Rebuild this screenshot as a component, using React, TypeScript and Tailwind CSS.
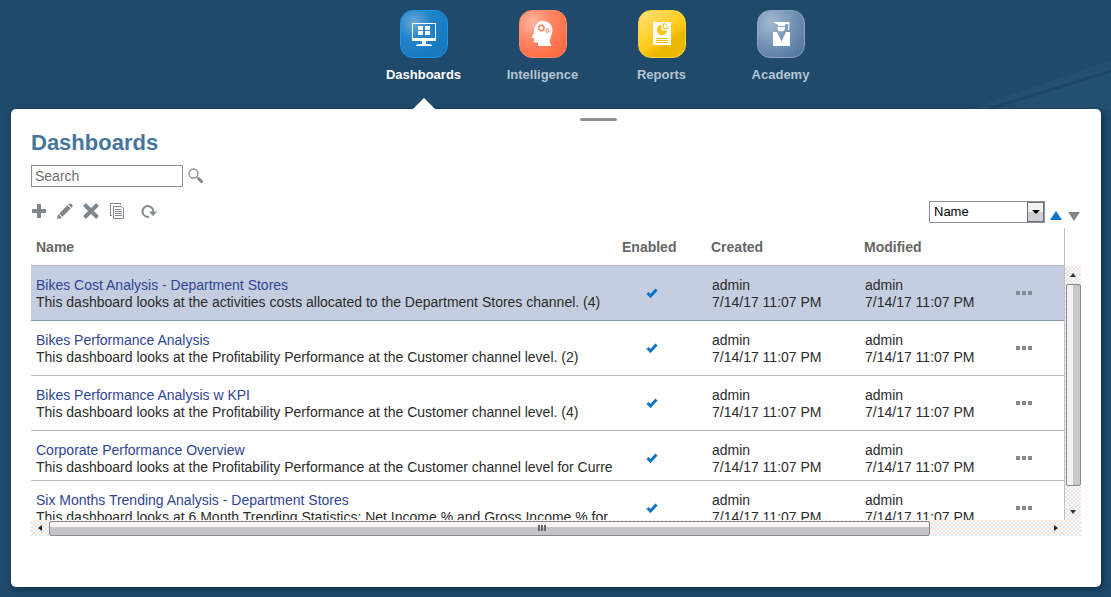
import React from "react";

const navItems = [
  { label: "Dashboards", active: true, tile: "border-[#1a94f5] bg-[radial-gradient(circle_at_28%_25%,#6aa9d6_0%,#2283c9_36%,#167abd_75%)]" },
  { label: "Intelligence", active: false, tile: "border-[#ff8a6b] bg-[radial-gradient(circle_at_28%_25%,#ffb5a0_0%,#ff8362_42%,#ff6a40_85%)]" },
  { label: "Reports", active: false, tile: "border-[#fcd43a] bg-[linear-gradient(145deg,#ffdf6a_8%,#ffc915_55%,#eab800_68%)]" },
  { label: "Academy", active: false, tile: "border-[#8ba6c3] bg-[radial-gradient(circle_at_28%_25%,#a3b9d0_0%,#7695b6_45%,#486e99_100%)]" },
];

const channel = "This dashboard looks at the Profitability Performance at the Customer channel level";

const rows = [
  {
    name: "Bikes Cost Analysis - Department Stores",
    text: "This dashboard looks at the activities costs allocated to the Department Stores channel. (4)",
    rowClass: "h-[55px] border-[#8d97ab] bg-[#c5cde0]",
  },
  { name: "Bikes Performance Analysis", text: channel + ". (2)", rowClass: "h-[55px] border-[#b8b8bc]" },
  { name: "Bikes Performance Analysis w KPI", text: channel + ". (4)", rowClass: "h-[55px] border-[#b8b8bc]" },
  { name: "Corporate Performance Overview", text: channel + " for Curre", rowClass: "h-[50px] border-[#b8b8bc]" },
  {
    name: "Six Months Trending Analysis - Department Stores",
    text: "This dashboard looks at 6 Month Trending Statistics: Net Income % and Gross Income % for",
    rowClass: "h-[50px] border-[#b8b8bc]",
  },
];

function NavGlyph({ name }: { name: string }) {
  if (name === "Dashboards") {
    return (
      <svg viewBox="0 0 48 48" className="size-12 shrink-0" aria-hidden="true">
        <path fill="#fff" fillRule="evenodd" d="M12 13h24v18H12zM13 14v14h22V14z" />
        <path fill="#fff" d="M18 16h5v4h-5zM25 16h5v4h-5zM18 21h5v4h-5zM25 21h5v4h-5zM22 31h4v3h-4zM16 35l3-1h10l3 1v1H16z" />
      </svg>
    );
  }
  if (name === "Intelligence") {
    return (
      <svg viewBox="0 0 48 48" className="size-12 shrink-0" aria-hidden="true">
        <path
          fill="#fff"
          d="M19 36v-3.500h-2.500c-1.200 0-1.700-.7-1.500-1.800l.3-2.700h-2.100c-.5 0-.6-.4-.3-.9l2-3.600c.2-.5.100-1 .1-1.600.2-6.600 3.500-10.900 9-10.900 5.600 0 9.500 4 9.500 9.300 0 4.200-2.300 6.500-2.600 9.800-.2 2.600.4 4.600 1.800 5.900z"
        />
        <circle cx="22.300" cy="18" r="2.500" fill="none" stroke="#f58a69" strokeWidth="1.300" />
        <circle cx="22.300" cy="18" r="3.500" fill="none" stroke="#f58a69" strokeWidth="1" strokeDasharray="1.300 1.450" />
        <circle cx="28.500" cy="20.700" r="1.400" fill="none" stroke="#f58a69" strokeWidth="1" />
        <circle cx="28.500" cy="20.700" r="2.200" fill="none" stroke="#f58a69" strokeWidth=".8" strokeDasharray="1 1" />
      </svg>
    );
  }
  if (name === "Reports") {
    return (
      <svg viewBox="0 0 48 48" className="size-12 shrink-0" aria-hidden="true">
        <path fill="#fff" d="M15 12h18v23H15z" />
        <path fill="#f8c40b" d="M23.500 15v5.500H29a5 5 0 1 1-5.500-5.500z" />
        <path fill="#fff" stroke="#f8c40b" d="M25.500 13.500a5 5 0 0 1 4.500 5h-4.500z" />
        <path fill="#f0bd03" d="M18 28h12v1H18zM18 30h12v1H18zM18 32h12v1H18z" />
      </svg>
    );
  }
  return (
    <svg viewBox="0 0 48 48" className="size-12 shrink-0" aria-hidden="true">
      <path fill="#fff" d="M17 12h15.500v1.500L32 20h-1l.5-6-3.500.5V16h-7v-1.500l-4-1.500z" />
      <path fill="#fff" d="M20.500 17H28v1.500c0 2-1.800 3-3.700 3s-3.800-1-3.800-3zM16 22h4l4.500 9.500L29 22h4v14H16z" />
    </svg>
  );
}

function IconButton({ label, children }: { label: string; children: React.ReactNode }) {
  return (
    <button type="button" aria-label={label} className="flex size-4 items-center justify-center text-[#7f878c]">
      {children}
    </button>
  );
}

function Toolbar() {
  return (
    <div className="flex items-center gap-[10px] pt-[2px]">
      <IconButton label="Add">
        <svg viewBox="0 0 16 16" className="size-4"><path fill="currentColor" d="M6 1h4v5h5v4h-5v5H6v-5H1V6h5z" /></svg>
      </IconButton>
      <IconButton label="Edit">
        <svg viewBox="0 0 16 16" className="size-4">
          <path fill="currentColor" d="M0 16l.8-4 .8-.8 3.200 3.200-.8.800zM2.200 10.600l8.300-8.300 3.200 3.200-8.300 8.300zM11.200 1.600l.8-.8Q13.300-.2 14.800 1.200t.4 2.800l-.8.800z" />
        </svg>
      </IconButton>
      <IconButton label="Delete">
        <svg viewBox="0 0 16 16" className="size-4"><path stroke="currentColor" strokeWidth="4" d="M1.500 1.500l13 13M14.500 1.500l-13 13" /></svg>
      </IconButton>
      <IconButton label="Copy">
        <svg viewBox="0 0 16 16" className="size-4">
          <path fill="none" stroke="currentColor" d="M1.500 12.500H3M1.500 13V.5h10V2M4.500 3.500h8l2 2v10h-10zM6 6.500h6M6 8.500h7M6 10.500h7M6 12.500h7" />
        </svg>
      </IconButton>
      <span className="flex pl-[6px]">
        <IconButton label="Refresh">
          <svg viewBox="0 0 16 16" className="size-4">
            <path fill="none" stroke="currentColor" strokeWidth="2" d="M8 14C4 14 1.500 11.500 1.500 8.500S4 3 6.500 3c3.200 0 5.500 2.300 5.700 5.500" />
            <path fill="currentColor" d="M8 8.500h8l-4 4.500z" />
          </svg>
        </IconButton>
      </span>
    </div>
  );
}

function SortSelect() {
  return (
    <div className="flex items-center pr-px">
      <div className="relative">
        <select
          aria-label="Sort by"
          className="block h-[22px] w-[116px] appearance-none border border-[#8a8fa5] bg-white pl-1 text-[13px] leading-5 text-black"
        >
          <option>Name</option>
          <option>Created</option>
          <option>Modified</option>
        </select>
        <span className="pointer-events-none absolute top-px right-px flex h-5 w-[17px] items-center justify-center border border-[#6d6f73] bg-linear-to-b from-[#f2f2f2] from-50% to-[#cfcfd2] to-50%">
          <svg viewBox="0 0 8 4" className="h-1 w-2"><path d="M0 0h8L4 4z" /></svg>
        </span>
      </div>
      <button type="button" aria-label="Sort ascending" className="mt-[6px] ml-[5px]">
        <svg viewBox="0 0 12 9" className="h-[9px] w-3"><path fill="#0e74c6" d="M6 0l6 9H0z" /></svg>
      </button>
      <button type="button" aria-label="Sort descending" className="mt-[8px] ml-[6px]">
        <svg viewBox="0 0 12 9" className="h-[9px] w-3"><path fill="#80888c" d="M0 0h12L6 9z" /></svg>
      </button>
    </div>
  );
}

function Stamp() {
  return (
    <>
      <div>admin</div>
      <div>7/14/17 11:07 PM</div>
    </>
  );
}

function DashboardTable() {
  return (
    <table className="w-full table-fixed border-collapse text-left text-sm leading-[17px] text-[#2b2b2b]">
      <colgroup>
        <col />
        <col className="w-[89px]" />
        <col className="w-[153px]" />
        <col className="w-[140px]" />
        <col className="w-[65px]" />
      </colgroup>
      <thead>
        <tr className="h-[37px] border-b border-[#b8b8bc] text-[#666]">
          <th className="px-[5px] pt-[3px] pb-0 font-bold">Name</th>
          <th className="px-[5px] pt-[3px] pb-0 font-bold">Enabled</th>
          <th className="px-[5px] pt-[3px] pb-0 font-bold">Created</th>
          <th className="px-[5px] pt-[3px] pb-0 font-bold">Modified</th>
          <th aria-label="Actions" />
        </tr>
      </thead>
      <tbody>
        {rows.map((row) => (
          <tr key={row.name} className={"border-b align-top " + row.rowClass}>
            <td className="overflow-hidden pt-[11px] pl-[5px] whitespace-nowrap">
              <a href="#" className="text-[#2f4594]">{row.name}</a>
              <div>{row.text}</div>
            </td>
            <td className="pt-[22px] pl-[29px]">
              <svg viewBox="0 0 12 10" className="h-[10px] w-3" role="img" aria-label="Enabled">
                <path fill="none" stroke="#0e74c6" strokeWidth="3" d="M1.500 5l3 3 6-6.500" />
              </svg>
            </td>
            <td className="pt-[11px] pl-[6px]"><Stamp /></td>
            <td className="pt-[11px] pl-[6px]"><Stamp /></td>
            <td className="pt-[25px] pl-[17px]">
              <button type="button" aria-label="More actions" className="flex gap-[2px]">
                <span className="size-1 bg-[#848b91]" />
                <span className="size-1 bg-[#848b91]" />
                <span className="size-1 bg-[#848b91]" />
              </button>
            </td>
          </tr>
        ))}
      </tbody>
    </table>
  );
}

const trackPattern = "bg-[#fbfaf9] bg-[conic-gradient(#f8e2da_25%,transparent_25%_50%,#dfe9ee_50%_75%,transparent_75%)] bg-size-[4px_4px]";

function VerticalBar() {
  return (
    <div className={"mt-[38px] flex flex-col items-center justify-between " + trackPattern}>
      <span className="flex h-[18px] items-center">
        <svg viewBox="0 0 6 4" className="h-1 w-[6px]"><path fill="#333" d="M3 0l3 4H0z" /></svg>
      </span>
      <span className="w-[15px] flex-1 rounded-xs border border-[#85888d] bg-linear-to-r from-[#f4f2f2] from-45% to-[#c7c8cc] to-45%" />
      <span className="flex h-[34px] items-end pb-[6px]">
        <svg viewBox="0 0 6 4" className="h-1 w-[6px]"><path fill="#333" d="M0 0h6L3 4z" /></svg>
      </span>
    </div>
  );
}

function HorizontalBar() {
  return (
    <div className={"col-span-2 flex h-4 items-center pr-[23px] " + trackPattern}>
      <span className="flex w-[18px] justify-center">
        <svg viewBox="0 0 4 6" className="h-[6px] w-1"><path fill="#222" d="M4 0v6L0 3z" /></svg>
      </span>
      <span className="mr-[124px] flex h-[15px] flex-1 items-center justify-center gap-px rounded-xs border border-[#85888d] bg-linear-to-b from-[#f4f2f2] from-40% to-[#c5c5c8] to-40% pl-[104px]">
        <span className="h-[6px] w-[2px] bg-[#66686c]" />
        <span className="h-[6px] w-[2px] bg-[#66686c]" />
        <span className="h-[6px] w-[2px] bg-[#66686c]" />
      </span>
      <svg viewBox="0 0 4 6" className="h-[6px] w-1"><path fill="#222" d="M0 0v6l4-3z" /></svg>
    </div>
  );
}

export default function App() {
  return (
    <div className="relative flex min-h-screen flex-col bg-[#1f4a6b] font-['Liberation_Sans',Arial,sans-serif]">
      <svg viewBox="0 0 240 109" className="absolute top-0 right-0 h-[109px] w-60" aria-hidden="true">
        <path fill="#245070" d="M100 109L240 60v49z" />
        <path stroke="#1c4666" strokeWidth="3" d="M118 109L240 71" />
      </svg>
      <header className="relative z-10 pl-[93px]">
        <nav className="flex h-[109px] justify-center pt-[10px]">
          {navItems.map((item) => (
            <a
              key={item.label}
              href="#"
              className={
                "relative flex w-[119px] flex-col items-center text-[13px] leading-[17px] font-bold " +
                (item.active ? "text-white" : "text-[#b4c4d1]")
              }
            >
              <span className={"flex size-12 items-center justify-center rounded-[13px] border " + item.tile}>
                <NavGlyph name={item.label} />
              </span>
              <span className="mt-2">{item.label}</span>
              {item.active && (
                <svg viewBox="0 0 22 11" className="absolute bottom-0 h-[11px] w-[22px]" aria-hidden="true">
                  <path fill="#fff" d="M11 0l11 11H0z" />
                </svg>
              )}
            </a>
          ))}
        </nav>
      </header>

      <main className="relative mr-[10px] mb-[10px] ml-[11px] flex-1 rounded-[5px] bg-white px-5 pt-[9px] pb-[50px] shadow-[2px_2px_6px_#0d2f49]">
        <div className="flex justify-center pl-[85px]">
          <span className="h-[3px] w-[37px] rounded-xs bg-[#8d9194]" />
        </div>
        <h1 className="mt-2 text-[22px] leading-7 font-bold text-[#47769d]">Dashboards</h1>
        <div className="mt-2 flex items-center gap-[5px]">
          <input
            type="text"
            aria-label="Search"
            placeholder="Search"
            className="h-[22px] w-[152px] border border-[#8a8fa5] bg-white px-[3px] text-sm leading-5 placeholder:text-[#707070]"
          />
          <button type="button" aria-label="Run search">
            <svg viewBox="0 0 16 16" className="size-4">
              <circle cx="5.500" cy="5.500" r="4.500" fill="none" stroke="#8b9195" strokeWidth="1.300" />
              <path stroke="#8b9195" strokeWidth="1.200" d="M8.500 8.500l2 2" />
              <path stroke="#7f868a" strokeWidth="3" d="M10 10l4.500 4.500" />
            </svg>
          </button>
        </div>
        <div className="mt-[14px] flex items-start justify-between">
          <Toolbar />
          <SortSelect />
        </div>
        <div className="mt-[5px] grid grid-cols-[minmax(0,1fr)_16px]">
          <div className="h-[292px] overflow-hidden border-r border-[#c0c0c4]">
            <DashboardTable />
          </div>
          <VerticalBar />
          <HorizontalBar />
        </div>
      </main>
    </div>
  );
}
